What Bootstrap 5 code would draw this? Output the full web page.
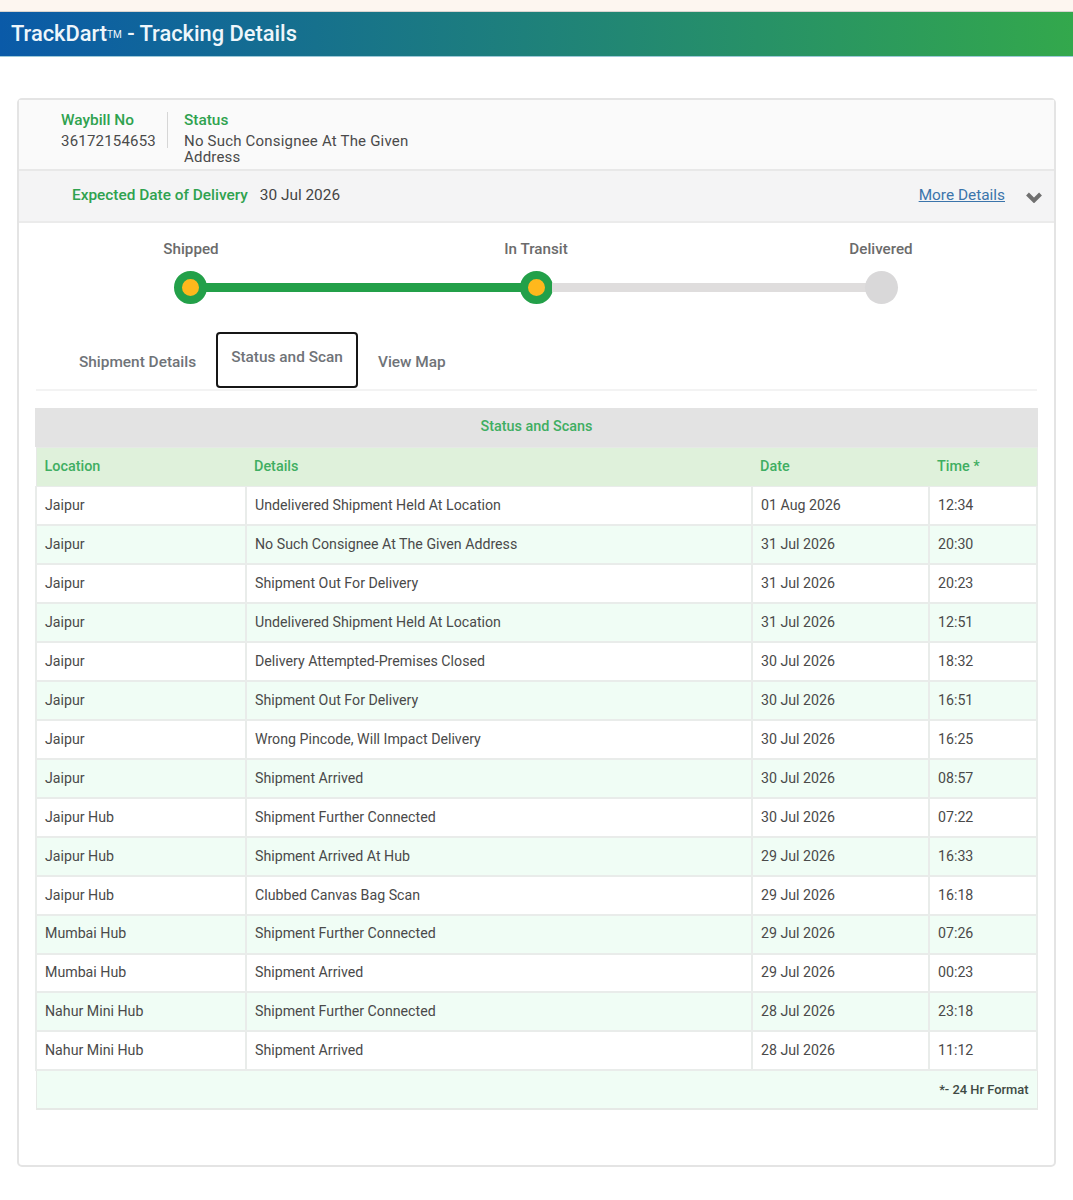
<!DOCTYPE html>
<html lang="en">
<head>
    <meta charset="UTF-8">
    <meta name="viewport" content="width=device-width, initial-scale=1.0">
    <title>TrackDart - Tracking Details</title>
    <link href="https://cdn.jsdelivr.net/npm/bootstrap@5.3.0/dist/css/bootstrap.min.css" rel="stylesheet">
    <style>
        body { font-family: Roboto, "Liberation Sans", sans-serif; font-size: 14.4px; color: #444; background: #fff; }
        .top-strip { height: 12px; background: #fdf6f0; border-bottom: 1px solid #d8d4d0; }
        .page-head { height: 45px; padding-left: 11px; background: linear-gradient(90deg, #0a5aa8 0%, #33a84c 100%); color: #eef6fb; font-size: 21.85px; font-weight: 500; line-height: 43px; border-bottom: 1px solid #9cc9d8; }
        .page-head sup { font-size: 10px; top: -3px; vertical-align: baseline; font-weight: 400; }
        .track-card { margin: 41px 17px 0 17px; height: 1069px; border: 2px solid #e4e4e4; border-radius: 5px; }
        .info-top { height: 71px; padding: 12px 0 0 42px; background: #fafafa; border-bottom: 2px solid #e8e8e8; line-height: 16px; }
        .info-label { color: #2fa24f; font-weight: 500; font-size: 15.4px; line-height: 16px; margin-bottom: 5px; }
        .info-val { font-size: 15px; color: #4a4a4a; letter-spacing: .2px; }
        .info-way { width: 107px; height: 36px; border-right: 1px solid #d6d6d6; }
        .info-status { width: 250px; padding-left: 16px; }
        .edd-bar { height: 52px; padding: 0 12px 0 53px; background: #f4f4f5; border-bottom: 2px solid #ebebeb; }
        .edd-label { color: #2fa24f; font-weight: 500; font-size: 15.4px; }
        .edd-date { color: #444; font-size: 15.4px; margin-left: 12px; }
        .more-link { color: #3b74ab; font-size: 15.4px; margin-right: 21px; }
        .edd-chev { margin-top: 2px; }
        .step-wrap { margin: 0 121px 0 120px; padding-top: 16px; }
        .step-names { font-size: 15.2px; font-weight: 500; color: #6b6b6b; height: 31px; line-height: 20px; }
        .step-names span { width: 104px; text-align: center; }
        .step-line { margin: 0 35px; height: 34px; }
        .step-dot { flex: none; width: 33px; height: 33px; border-radius: 50%; background: #d9d8d9; }
        .step-dot.step-on { background: #ffb81c; border: 8px solid #23a049; }
        .step-bar { flex: 1; height: 9px; margin: 0 -1px; background: #dfdddd; }
        .step-bar.step-on { background: #23a049; }
        .tab-row { margin: 28px 17px 0 17px; height: 59px; padding-left: 29px; border-bottom: 2px solid #f3f3f3; }
        .tab-row .nav-link { border: 0; color: #6f7378; font-size: 15.4px; font-weight: 500; padding: 0; margin-top: 19px; }
        .tab-row .nav-link.tab-first { width: 151px; padding-left: 14px; }
        .tab-row .nav-link.tab-cur { width: 142px; height: 56px; margin-top: 0; padding-top: 12px; text-align: center; background: #fff; color: #6f7378; border: 2px solid #161616; border-radius: 4px; }
        .tab-last { margin-left: 20px; }
        .scan-table { width: 1001px; margin: 17px 0 0 16px; table-layout: fixed; border-collapse: collapse; font-size: 14.2px; border: 1px solid #e6e9e6; }
        .scan-table th, .scan-table td { padding: 0 8px; height: 39px; }
        .scan-table caption { caption-side: top; height: 39px; padding: 0; line-height: 37px; text-align: center; background: #e3e3e3; color: #3fae62; font-size: 14.4px; font-weight: 500; }
        .scan-table thead th { background: #dff1db; color: #3fae62; font-size: 14.4px; font-weight: 500; }
        .scan-table tbody td { height: 38.93px; border: 2px solid #e9ecea; color: #4a4a4a; border-top-width: 1px; }
        .scan-table tbody tr:nth-child(even) td { background: #f0fdf5; }
        .scan-table tfoot td { background: #f0fdf5; text-align: right; font-size: 12.9px; font-weight: 500; color: #3f4a44; border-bottom: 2px solid #e6e9e6; }
    </style>
</head>
<body>
    <div class="top-strip"></div>
    <div class="page-head">TrackDart<sup>TM</sup> - Tracking Details</div>

    <div class="track-card bg-white">
        <div class="info-top d-flex">
            <div class="info-way">
                <div class="info-label">Waybill No</div>
                <div class="info-val">36172154653</div>
            </div>
            <div class="info-status">
                <div class="info-label">Status</div>
                <div class="info-val">No Such Consignee At The Given Address</div>
            </div>
        </div>

        <div class="edd-bar d-flex align-items-center">
            <span class="edd-label">Expected Date of Delivery</span>
            <span class="edd-date">30 Jul 2026</span>
            <a href="#" class="more-link ms-auto">More Details</a>
            <svg width="16" height="12" viewBox="0 0 16 12" class="edd-chev"><path d="M1.5 3 8 9.5 14.5 3" fill="none" stroke="#707070" stroke-width="4"/></svg>
        </div>

        <div class="step-wrap">
            <div class="step-names d-flex justify-content-between">
                <span>Shipped</span>
                <span>In Transit</span>
                <span>Delivered</span>
            </div>
            <div class="step-line d-flex align-items-center">
                <div class="step-dot step-on"></div>
                <div class="step-bar step-on"></div>
                <div class="step-dot step-on"></div>
                <div class="step-bar"></div>
                <div class="step-dot"></div>
            </div>
        </div>

        <ul class="nav tab-row">
            <li class="nav-item"><a class="nav-link tab-first" href="#">Shipment Details</a></li>
            <li class="nav-item"><a class="nav-link tab-cur" href="#">Status and Scan</a></li>
            <li class="nav-item"><a class="nav-link tab-last" href="#">View Map</a></li>
        </ul>

        <table class="scan-table">
            <caption>Status and Scans</caption>
            <colgroup>
                <col style="width: 210px">
                <col style="width: 506px">
                <col style="width: 177px">
                <col style="width: 108px">
            </colgroup>
            <thead>
                <tr><th>Location</th><th>Details</th><th>Date</th><th>Time *</th></tr>
            </thead>
            <tbody>
                <tr><td>Jaipur</td><td>Undelivered Shipment Held At Location</td><td>01 Aug 2026</td><td>12:34</td></tr>
                <tr><td>Jaipur</td><td>No Such Consignee At The Given Address</td><td>31 Jul 2026</td><td>20:30</td></tr>
                <tr><td>Jaipur</td><td>Shipment Out For Delivery</td><td>31 Jul 2026</td><td>20:23</td></tr>
                <tr><td>Jaipur</td><td>Undelivered Shipment Held At Location</td><td>31 Jul 2026</td><td>12:51</td></tr>
                <tr><td>Jaipur</td><td>Delivery Attempted-Premises Closed</td><td>30 Jul 2026</td><td>18:32</td></tr>
                <tr><td>Jaipur</td><td>Shipment Out For Delivery</td><td>30 Jul 2026</td><td>16:51</td></tr>
                <tr><td>Jaipur</td><td>Wrong Pincode, Will Impact Delivery</td><td>30 Jul 2026</td><td>16:25</td></tr>
                <tr><td>Jaipur</td><td>Shipment Arrived</td><td>30 Jul 2026</td><td>08:57</td></tr>
                <tr><td>Jaipur Hub</td><td>Shipment Further Connected</td><td>30 Jul 2026</td><td>07:22</td></tr>
                <tr><td>Jaipur Hub</td><td>Shipment Arrived At Hub</td><td>29 Jul 2026</td><td>16:33</td></tr>
                <tr><td>Jaipur Hub</td><td>Clubbed Canvas Bag Scan</td><td>29 Jul 2026</td><td>16:18</td></tr>
                <tr><td>Mumbai Hub</td><td>Shipment Further Connected</td><td>29 Jul 2026</td><td>07:26</td></tr>
                <tr><td>Mumbai Hub</td><td>Shipment Arrived</td><td>29 Jul 2026</td><td>00:23</td></tr>
                <tr><td>Nahur Mini Hub</td><td>Shipment Further Connected</td><td>28 Jul 2026</td><td>23:18</td></tr>
                <tr><td>Nahur Mini Hub</td><td>Shipment Arrived</td><td>28 Jul 2026</td><td>11:12</td></tr>
            </tbody>
            <tfoot>
                <tr><td colspan="4">*- 24 Hr Format</td></tr>
            </tfoot>
        </table>
    </div>

    <script src="https://cdn.jsdelivr.net/npm/bootstrap@5.3.0/dist/js/bootstrap.bundle.min.js"></script>
</body>
</html>
